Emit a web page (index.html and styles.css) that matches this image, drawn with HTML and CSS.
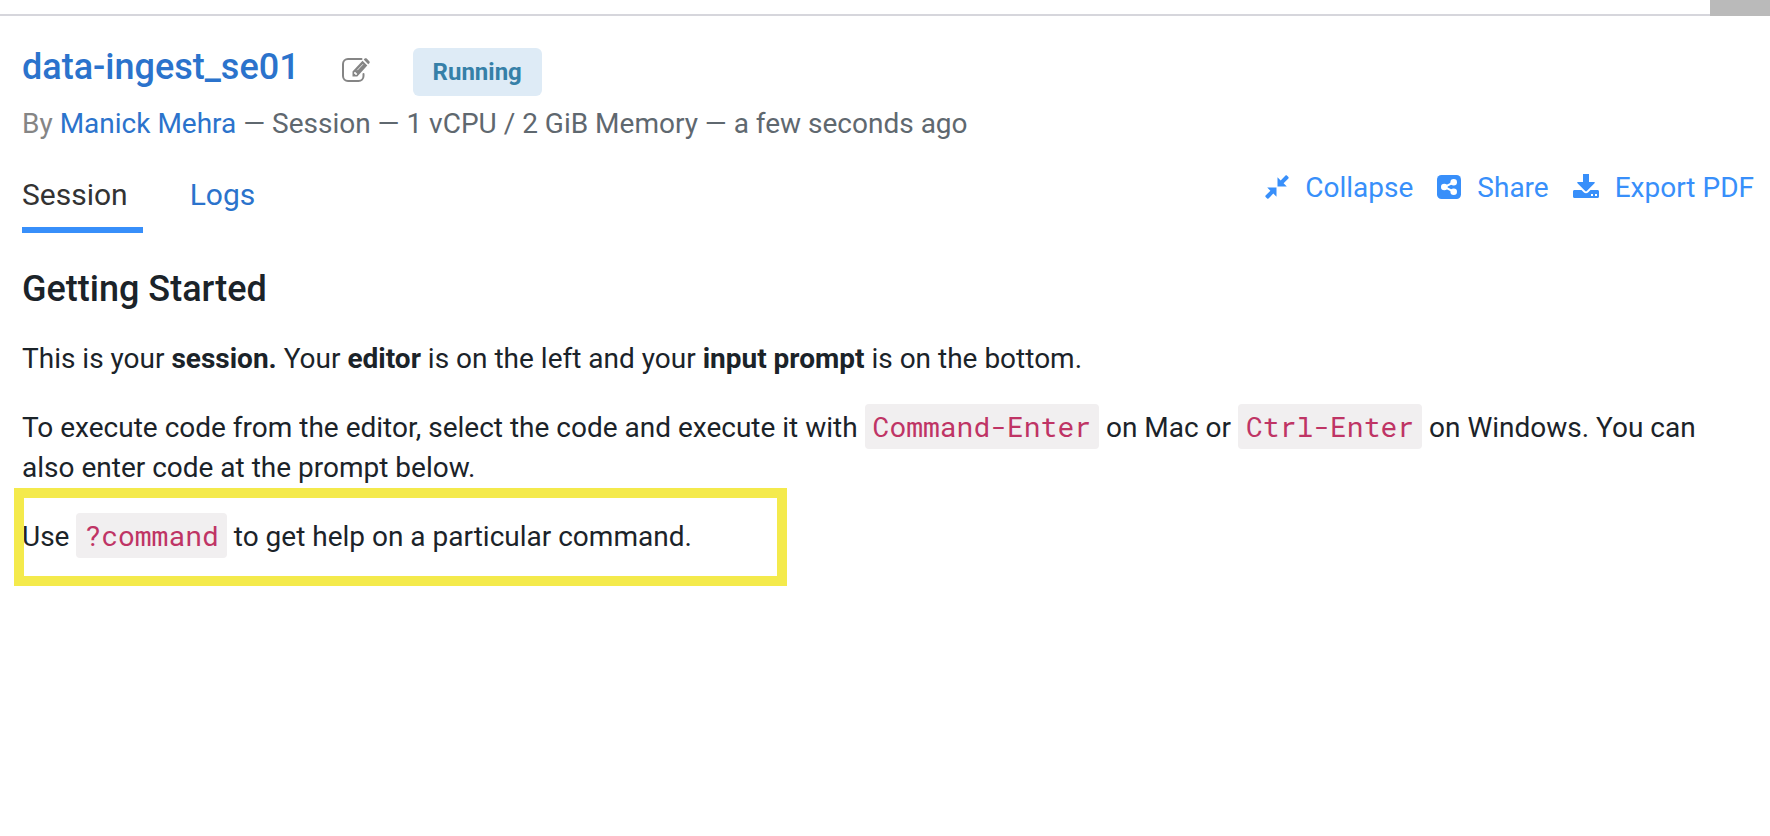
FILE: index.html
```html
<!DOCTYPE html>
<html lang="en">
<head>
<meta charset="utf-8">
<title>data-ingest_se01</title>
<link rel="stylesheet" href="styles.css">
</head>
<body>
<div class="topbar"><div class="topbar-handle"></div></div>
<header class="header">
  <div class="title-row">
    <h1 class="title"><a href="#">data-ingest_se01</a></h1>
    <button class="edit" type="button" aria-label="Edit name">
      <svg width="28" height="24" viewBox="0 0 28 24" fill="none">
        <path d="M19.500 1H6a5 5 0 0 0-5 5v12a5 5 0 0 0 5 5h10.500a5 5 0 0 0 5-5v-2" stroke="#858585" stroke-width="2" stroke-linecap="round"/>
        <path d="M20.500 2.700l4.800 4.800L15.300 18.500H10.500v-5zM21.700 1.600l1-1c.6-.6 1.400-.6 2 0l2.600 2.600c.6.600.6 1.400 0 2l-1.100 1.100z" fill="#858585"/>
        <path d="M12 14.700v1h1.300v1.300h1l1-1-2.300-2.300z" fill="#fff"/>
        <path d="M15.300 12.200l5.700-6" stroke="#fff" stroke-width=".8"/>
      </svg>
    </button>
    <span class="badge">Running</span>
  </div>
  <p class="meta"><span class="by">By</span> <a href="#">Manick Mehra</a> — Session — 1 vCPU / 2 GiB Memory — a few seconds ago</p>
</header>
<div class="toolbar">
  <nav class="tabs">
    <a class="tab tab-active" href="#">Session</a>
    <a class="tab" href="#">Logs</a>
  </nav>
  <div class="actions">
    <button class="action" type="button">
      <svg width="24" height="24" viewBox="0 0 24 24" fill="currentColor">
        <path d="M12.500 11.500V2.200l3.200 3.200L20.500.6c.4-.4 1-.4 1.400 0l1.500 1.500c.4.400.4 1 0 1.400L18.600 8.300l3.200 3.200z"/>
        <path d="M11.500 12.500v9.300l-3.200-3.200-4.800 4.800c-.4.400-1 .4-1.400 0L.6 21.900c-.4-.4-.4-1 0-1.400l4.800-4.800-3.200-3.200z"/>
      </svg>Collapse</button>
    <button class="action" type="button">
      <svg width="24" height="24" viewBox="0 0 24 24">
        <rect width="24" height="24" rx="4.500" fill="currentColor"/>
        <g fill="#fff"><circle cx="7.300" cy="12" r="3.300"/><circle cx="16.700" cy="7.300" r="3.300"/><circle cx="16.700" cy="16.700" r="3.300"/></g>
        <path d="M16.700 7.300L7.300 12l9.400 4.700" fill="none" stroke="#fff" stroke-width="2"/>
      </svg>Share</button>
    <button class="action" type="button">
      <svg class="icon-export" width="26" height="24" viewBox="0 0 26 24" fill="currentColor">
        <path d="M10 0h6v8h5c.8 0 1 .7.500 1.300l-7.700 7.700c-.5.500-1.100.5-1.600 0L4.500 9.300C4 8.700 4.200 8 5 8h5z"/>
        <path fill-rule="evenodd" d="M1.500 16h7l2.200 2.200c1.300 1.300 3.300 1.300 4.600 0L17.500 16h7c.9 0 1.500.6 1.500 1.500v5c0 .9-.6 1.500-1.500 1.500h-23C.6 24 0 23.400 0 22.500v-5C0 16.600.6 16 1.500 16zM18 20v2h2v-2zm4 0v2h2v-2z"/>
      </svg>Export PDF</button>
  </div>
</div>
<main class="content">
  <h2 class="heading">Getting Started</h2>
  <p>This is your <strong>session.</strong> Your <strong>editor</strong> is on the left and your <strong>input prompt</strong> is on the bottom.</p>
  <p>To execute code from the editor, select the code and execute it with <code>Command-Enter</code> on Mac or <code>Ctrl-Enter</code> on Windows. You can also enter code at the prompt below.</p>
  <p class="highlight">Use <code>?command</code> to get help on a particular command.</p>
</main>
</body>
</html>
```

FILE: styles.css
```css
* { box-sizing: border-box; }
body {
  margin: 0;
  background: #fff;
  color: #1b2329;
  font: 28px/40px Roboto, sans-serif;
}
h1, h2, p { margin: 0; }
a { color: #2b73cc; text-decoration: none; }
button {
  border: 0;
  padding: 0;
  background: none;
  font: inherit;
  cursor: pointer;
}
.topbar {
  display: flex;
  justify-content: flex-end;
  height: 16px;
  border-bottom: 2px solid #d6d6dc;
}
.topbar-handle { width: 60px; height: 16px; background: #bababa; }
.header { padding: 32px 22px 0; }
.title-row { display: flex; align-items: center; height: 48px; }
.title { font-size: 36px; font-weight: 500; line-height: 40px; padding-bottom: 10px; }
.edit { display: flex; margin: 0 43px 4px 42px; }
.badge {
  padding: 4px 20px;
  border-radius: 6px;
  background: #deebf6;
  color: #3680a8;
  font-size: 24px;
  font-weight: 700;
}
.meta { margin-top: 8px; color: #5f686f; }
.by { color: #858585; }
.toolbar {
  display: flex;
  justify-content: space-between;
  align-items: flex-start;
  padding: 24px 16px 0 22px;
}
.tabs { display: flex; gap: 47px; font-size: 30px; }
.tab { padding: 7px 15px 12px 0; border-bottom: 6px solid transparent; }
.tab-active { color: #333; border-color: #388ffa; }
.actions { display: flex; gap: 24px; }
.action {
  display: flex;
  align-items: center;
  gap: 16px;
  color: #388ffa;
}
.action svg { margin-bottom: 2px; }
.action .icon-export { margin-bottom: 4px; }
.content { padding: 36px 22px; }
.heading { font-size: 36px; font-weight: 500; line-height: 40px; }
.content p { margin-top: 29px; }
.content .heading + p { margin-top: 30px; }
code {
  padding: 4px 8px;
  border-radius: 4px;
  background: #f1eff0;
  color: #bf3465;
  font-family: "Roboto Mono", "Liberation Mono", monospace;
  font-size: 28px;
  line-height: 32px;
}
.highlight { position: relative; width: fit-content; }
.highlight::after {
  content: "";
  position: absolute;
  inset: -29px -95px -29px -8px;
  border: 10px solid #f4ea4c;
}
```
